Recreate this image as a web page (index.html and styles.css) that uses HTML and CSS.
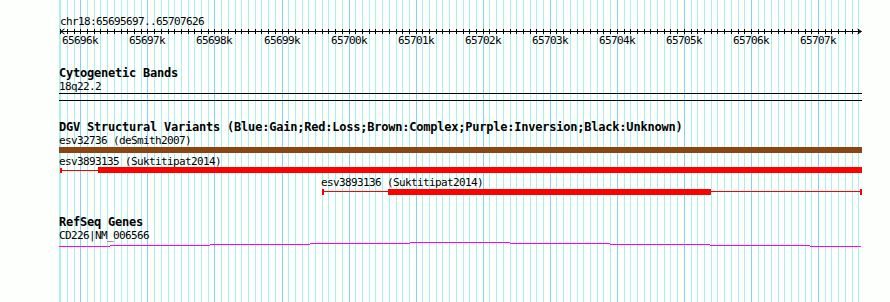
FILE: index.html
```html
<!DOCTYPE html>
<html>
<head>
<meta charset="utf-8">
<title>chr18:65695697..65707626</title>
<link rel="stylesheet" href="styles.css">
</head>
<body>
<div class="page">
  <svg class="grid" id="grid" width="890" height="302" xmlns="http://www.w3.org/2000/svg"></svg>
  <div class="panel">
    <div class="loc">chr18:65695697..65707626</div>
    <svg class="ruler" id="ruler" width="890" height="20" xmlns="http://www.w3.org/2000/svg"></svg>

    <section class="track track-cyto">
      <div class="title">Cytogenetic Bands</div>
      <div class="label">18q22.2</div>
      <div class="band"></div>
    </section>

    <section class="track track-dgv">
      <div class="title">DGV Structural Variants (Blue:Gain;Red:Loss;Brown:Complex;Purple:Inversion;Black:Unknown)</div>
      <div class="label">esv32736 (deSmith2007)</div>
      <div class="lane">
        <div class="bar brown" style="left:59px;width:803px"></div>
      </div>
      <div class="label">esv3893135 (Suktitipat2014)</div>
      <div class="lane lane-2">
        <div class="cap red" style="left:60px"></div>
        <div class="thin red" style="left:60px;width:38px"></div>
        <div class="bar red" style="left:98px;width:764px"></div>
      </div>
      <div class="label label-far">esv3893136 (Suktitipat2014)</div>
      <div class="lane lane-3">
        <div class="cap red" style="left:322px"></div>
        <div class="thin red" style="left:322px;width:540px"></div>
        <div class="bar red" style="left:388px;width:323px"></div>
        <div class="cap red" style="left:860px"></div>
      </div>
    </section>

    <section class="track track-refseq">
      <div class="title">RefSeq Genes</div>
      <div class="label">CD226|NM_006566</div>
      <div class="lane lane-gene">
        <div class="seg" style="left:59px;width:51px;top:4px"></div>
        <div class="seg" style="left:110px;width:100px;top:3px"></div>
        <div class="seg" style="left:210px;width:100px;top:2px"></div>
        <div class="seg" style="left:310px;width:100px;top:1px"></div>
        <div class="seg" style="left:410px;width:100px;top:0px"></div>
        <div class="seg" style="left:510px;width:100px;top:1px"></div>
        <div class="seg" style="left:610px;width:100px;top:2px"></div>
        <div class="seg" style="left:710px;width:100px;top:3px"></div>
        <div class="seg" style="left:810px;width:51px;top:4px"></div>
      </div>
    </section>
  </div>
</div>
<script src="script.js"></script>
</body>
</html>
```

FILE: styles.css
```css
html, body {
  margin: 0;
  padding: 0;
  background: #fdfffd;
}

.page {
  position: relative;
  width: 890px;
  height: 302px;
  overflow: hidden;
  background: #fdfffd;
  font-family: "DejaVu Sans Mono", "Liberation Mono", monospace;
  color: #000;
}

.grid {
  position: absolute;
  left: 0;
  top: 0;
}

.grid-minor {
  stroke: #aeeeee;
  stroke-width: 1;
  fill: none;
}

.grid-major {
  stroke: #87cefa;
  stroke-width: 1;
  fill: none;
}

.panel {
  position: relative;
  padding-top: 15px;
}

.loc,
.label {
  height: 13px;
  line-height: 13px;
  font-size: 11px;
  letter-spacing: -0.62px;
  white-space: nowrap;
}

.loc {
  padding-left: 60px;
}

.label {
  padding-left: 59px;
}

.label-far {
  padding-left: 321px;
}

.title {
  height: 13px;
  line-height: 13px;
  font-size: 12px;
  font-weight: bold;
  letter-spacing: -0.22px;
  white-space: nowrap;
  padding-left: 59px;
}

.ruler {
  display: block;
}

.ruler-line {
  stroke: #000;
  stroke-width: 1;
  fill: none;
  shape-rendering: crispEdges;
}

.ruler-arrow {
  stroke: #000;
  stroke-width: 1;
  fill: none;
}

.ruler-label {
  font-family: "DejaVu Sans Mono", "Liberation Mono", monospace;
  font-size: 11px;
  letter-spacing: -0.62px;
  fill: #000;
}

.track-cyto {
  margin-top: 19px;
}

.band {
  margin-left: 59px;
  width: 803px;
  height: 6px;
  border-top: 1px solid #000;
  border-bottom: 1px solid #000;
}

.track-dgv {
  margin-top: 20px;
}

.track-refseq {
  margin-top: 19px;
}

.lane {
  position: relative;
  height: 8px;
}

.bar {
  position: absolute;
  top: 0;
  height: 6px;
}

.lane-2 .bar {
  top: -1px;
}

.thin {
  position: absolute;
  top: 2px;
  height: 1px;
}

.lane-2 .thin {
  top: 2px;
}

.cap {
  position: absolute;
  top: 0;
  width: 2px;
  height: 6px;
}

.lane-2 .cap {
  top: 0;
  height: 5px;
}

.brown {
  background: #8b4513;
}

.red {
  background: #ff0000;
}

.lane-gene {
  height: 10px;
}

.seg {
  position: absolute;
  height: 1px;
  background: #ff00ff;
}
```

FILE: script.js
```js
(function () {
  var NS = 'http://www.w3.org/2000/svg';
  var start = 65695697;
  var end = 65707626;
  var scale = 800 / (end - start);

  function X(p) {
    return Math.round(60 + (p - start) * scale);
  }

  function add(parent, tag, attrs, text) {
    var el = document.createElementNS(NS, tag);
    for (var k in attrs) el.setAttribute(k, attrs[k]);
    if (text) el.textContent = text;
    parent.appendChild(el);
    return el;
  }

  // background grid
  var grid = document.getElementById('grid');
  var minor = 'M59.5 0V302';
  var major = '';
  for (var p = 65695700; p <= end; p += 100) {
    var x = X(p) + 0.5;
    if (p % 1000 === 0) major += 'M' + x + ' 0V302';
    else minor += 'M' + x + ' 0V302';
  }
  add(grid, 'path', { d: minor, 'class': 'grid-minor' });
  add(grid, 'path', { d: major, 'class': 'grid-major' });

  // ruler
  var ruler = document.getElementById('ruler');
  var d = 'M60 3.5H861';
  for (var q = 65695700; q <= end; q += 100) {
    var tx = X(q) + 0.5;
    d += 'M' + tx + ' 1V6';
  }
  add(ruler, 'path', { d: d, 'class': 'ruler-line' });
  add(ruler, 'path', { d: 'M64.5 1L60.5 3.5L64.5 6', 'class': 'ruler-arrow' });
  add(ruler, 'path', { d: 'M857.5 1L861.5 3.5L857.5 6', 'class': 'ruler-arrow' });

  for (var k = 65696; k <= 65707; k++) {
    add(ruler, 'text', {
      x: X(k * 1000),
      y: 16,
      'text-anchor': 'middle',
      'class': 'ruler-label'
    }, k + 'k');
  }
})();
```
